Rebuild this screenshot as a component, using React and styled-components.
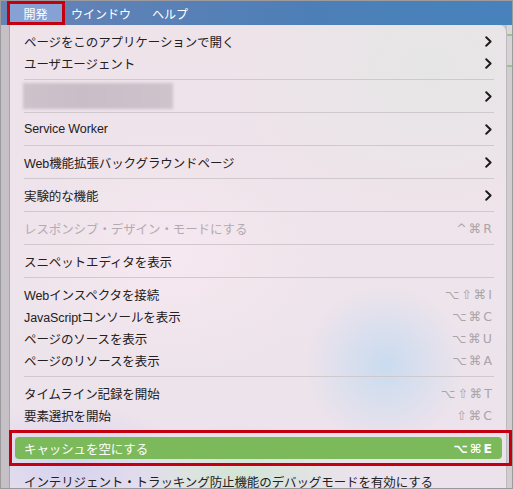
import React from "react";
import styled, { createGlobalStyle } from "styled-components";

const GlobalStyle = createGlobalStyle`
  html, body {
    margin: 0;
    padding: 0;
    background: #c6c2c6;
  }
  body {
    font-family: "Liberation Sans", "Noto Sans CJK JP", sans-serif;
  }
`;

const Frame = styled.div`
  position: relative;
  width: 513px;
  height: 489px;
  box-sizing: border-box;
  border: 1px solid #9c9a9c;
  overflow: hidden;
  display: flex;
  flex-direction: column;
  background: #c6c2c6;
`;

const MenuBar = styled.div`
  height: 24px;
  flex: none;
  display: flex;
  align-items: stretch;
  padding-left: 8px;
  background: linear-gradient(to right, #6783b6, #4d7fb6 60%, #4782bc);
  font-size: 12px;
  color: #ffffff;
`;

const MenuTitle = styled.div`
  display: flex;
  align-items: center;
  justify-content: center;
  padding: 0 ${(p) => (p.$active ? "0" : "9px")};
  width: ${(p) => (p.$active ? "53px" : "auto")};
  margin-right: ${(p) => (p.$active ? "0" : "3px")};
  background: ${(p) => (p.$active ? "#86a2d4" : "transparent")};
  font-family: "Noto Sans CJK JP", sans-serif;
`;

const Body = styled.div`
  flex: 1;
  display: flex;
  min-height: 0;
`;

const LeftStrip = styled.div`
  width: 8px;
  flex: none;
  background: #c4c0c5;
  border-right: 1px solid #a9a5aa;
`;

const RightStrip = styled.div`
  width: 5px;
  flex: none;
  background: linear-gradient(
    to bottom,
    #d8d8d8 0px,
    #d8d8d8 9px,
    #9cc38a 9px,
    #9cc38a 11px,
    #d6d2d6 11px,
    #d6d2d6 40px,
    #9cc38a 40px,
    #9cc38a 42px,
    #d0ccd0 42px
  );
`;

const Menu = styled.div`
  flex: 1;
  display: flex;
  flex-direction: column;
  padding: 5px 4px 0 5px;
  border-top-right-radius: 7px;
  border-right: 1px solid #bdbabd;
  background:
    radial-gradient(ellipse 80px 80px at 375px 340px, rgba(195, 218, 240, 0.85), rgba(195, 218, 240, 0) 100%),
    radial-gradient(ellipse 120px 60px at 60px 440px, rgba(205, 205, 240, 0.75), rgba(205, 205, 240, 0) 100%),
    radial-gradient(ellipse 110px 50px at 230px 450px, rgba(200, 230, 205, 0.75), rgba(200, 230, 205, 0) 100%),
    radial-gradient(ellipse 200px 150px at 420px 40px, rgba(230, 230, 230, 1), rgba(230, 230, 230, 0) 100%),
    radial-gradient(ellipse 160px 120px at 160px 230px, rgba(246, 232, 240, 1), rgba(246, 232, 240, 0) 100%),
    linear-gradient(to bottom, #efe3ea, #eee4eb 60%, #ebe2ec);
`;

const Item = styled.div`
  height: 22px;
  flex: none;
  display: flex;
  align-items: center;
  justify-content: space-between;
  padding: 0 10px 0 9px;
  border-radius: 4px;
  font-size: 12.5px;
  color: ${(p) => (p.$selected ? "#ffffff" : p.$disabled ? "#b3aab1" : "#232022")};
  background: ${(p) => (p.$selected ? "#7bb95b" : "transparent")};
  white-space: nowrap;
`;

const Label = styled.span`
  letter-spacing: -0.1px;
`;

const Shortcut = styled.span`
  font-family: "DejaVu Sans", "Liberation Sans", sans-serif;
  font-size: 12.5px;
  letter-spacing: 2px;
  margin-right: -2px;
  color: ${(p) => (p.$selected ? "#ffffff" : "#aaa4a9")};
  font-weight: ${(p) => (p.$selected ? "bold" : "normal")};
`;

const Separator = styled.div`
  height: 1px;
  flex: none;
  margin: 5px 8px 5px 9px;
  background: #cfc8cd;
`;

const Blurred = styled.div`
  width: 150px;
  height: 26px;
  margin-left: -1px;
  background: linear-gradient(to right, #cdc1ca, #c9bdc7 40%, #cec2cb);
  filter: blur(1.5px);
`;

const RedBox = styled.div`
  position: absolute;
  left: ${(p) => p.$x}px;
  top: ${(p) => p.$y}px;
  width: ${(p) => p.$w}px;
  height: ${(p) => p.$h}px;
  box-sizing: border-box;
  border: 3px solid #c40010;
  pointer-events: none;
`;

const Chevron = () => (
  <svg width="7" height="11" viewBox="0 0 7 11">
    <polyline
      points="1.2,1.2 5.6,5.5 1.2,9.8"
      fill="none"
      stroke="#1c1a1c"
      strokeWidth="1.9"
      strokeLinecap="round"
      strokeLinejoin="round"
    />
  </svg>
);

const sections = [
  [
    { label: "ページをこのアプリケーションで開く", sub: true },
    { label: "ユーザエージェント", sub: true },
  ],
  [{ blurred: true, sub: true }],
  [{ label: "Service Worker", sub: true }],
  [{ label: "Web機能拡張バックグラウンドページ", sub: true }],
  [{ label: "実験的な機能", sub: true }],
  [{ label: "レスポンシブ・デザイン・モードにする", key: "^⌘R", disabled: true }],
  [{ label: "スニペットエディタを表示" }],
  [
    { label: "Webインスペクタを接続", key: "⌥⇧⌘I" },
    { label: "JavaScriptコンソールを表示", key: "⌥⌘C" },
    { label: "ページのソースを表示", key: "⌥⌘U" },
    { label: "ページのリソースを表示", key: "⌥⌘A" },
  ],
  [
    { label: "タイムライン記録を開始", key: "⌥⇧⌘T" },
    { label: "要素選択を開始", key: "⇧⌘C" },
  ],
  [{ label: "キャッシュを空にする", key: "⌥⌘E", selected: true }],
  [{ label: "インテリジェント・トラッキング防止機能のデバッグモードを有効にする" }],
];

const MenuRow = ({ item }) => (
  <Item $selected={item.selected} $disabled={item.disabled}>
    {item.blurred ? <Blurred /> : <Label>{item.label}</Label>}
    {item.sub && <Chevron />}
    {item.key && <Shortcut $selected={item.selected}>{item.key}</Shortcut>}
  </Item>
);

export default function App() {
  return (
    <>
      <GlobalStyle />
      <Frame>
        <MenuBar>
          <MenuTitle $active>開発</MenuTitle>
          <MenuTitle>ウインドウ</MenuTitle>
          <MenuTitle>ヘルプ</MenuTitle>
        </MenuBar>
        <Body>
          <LeftStrip />
          <Menu>
            {sections.map((group, gi) => (
              <React.Fragment key={gi}>
                {gi > 0 && <Separator />}
                {group.map((item, ii) => (
                  <MenuRow key={ii} item={item} />
                ))}
              </React.Fragment>
            ))}
          </Menu>
          <RightStrip />
        </Body>
        <RedBox $x={6} $y={0} $w={58} $h={24} />
        <RedBox $x={8} $y={429} $w={503} $h={36} />
      </Frame>
    </>
  );
}
